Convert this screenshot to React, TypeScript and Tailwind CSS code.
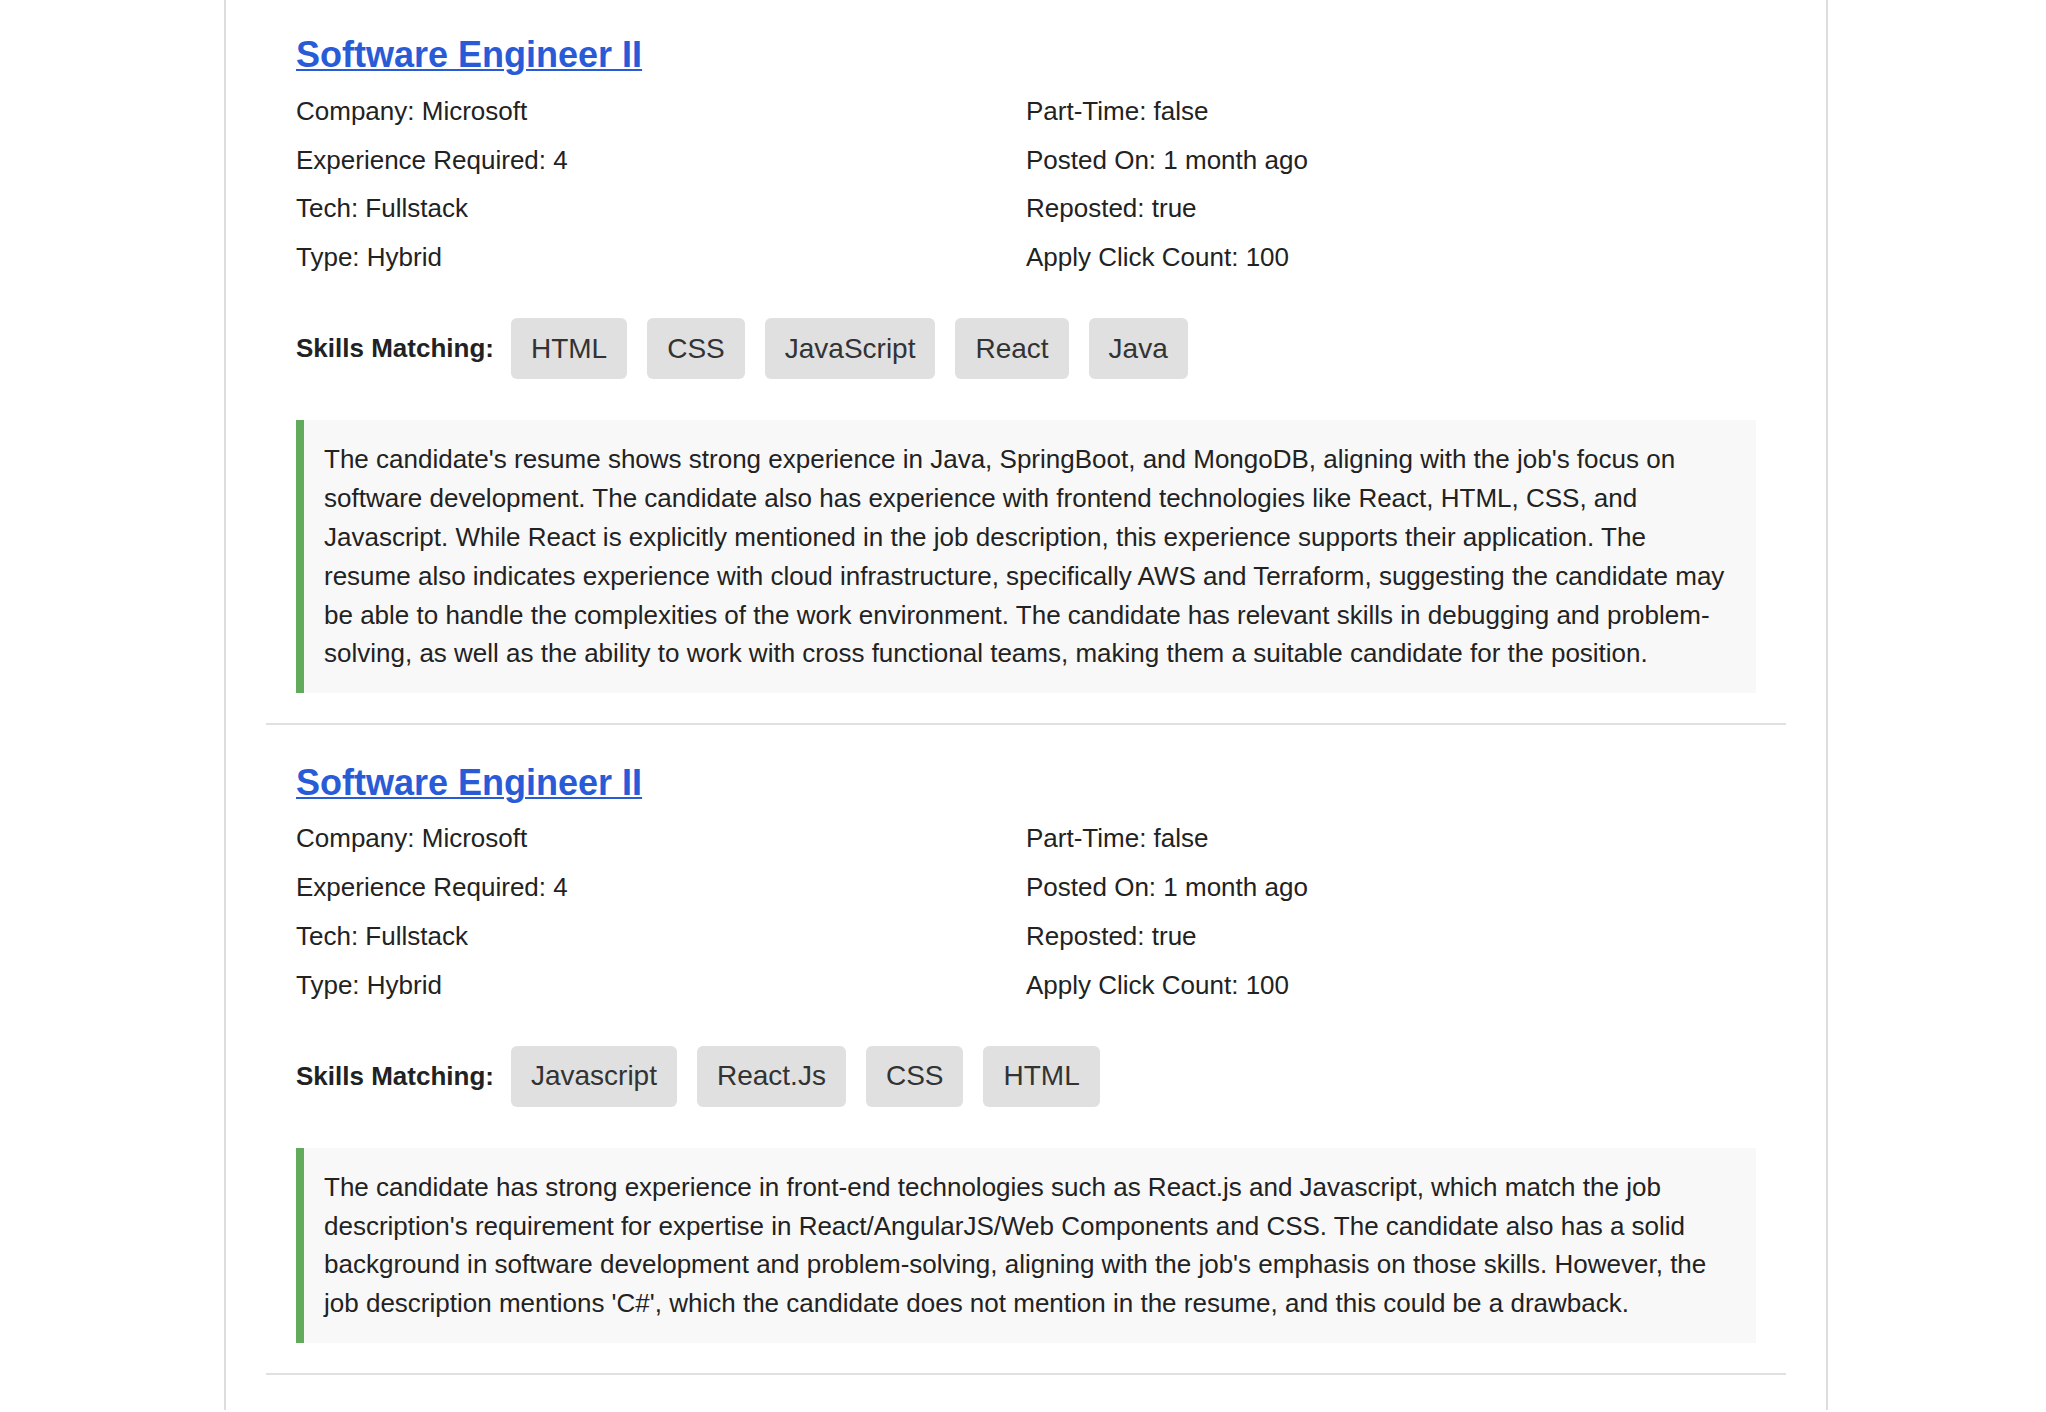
import React from "react";

type Job = {
  title: string;
  company: string;
  experience: string;
  tech: string;
  type: string;
  partTime: string;
  postedOn: string;
  reposted: string;
  applyClicks: string;
  skills: string[];
  summary: string[];
};

const jobs: Job[] = [
  {
    title: "Software Engineer II",
    company: "Microsoft",
    experience: "4",
    tech: "Fullstack",
    type: "Hybrid",
    partTime: "false",
    postedOn: "1 month ago",
    reposted: "true",
    applyClicks: "100",
    skills: ["HTML", "CSS", "JavaScript", "React", "Java"],
    summary: [
      "The candidate's resume shows strong experience in Java, SpringBoot, and MongoDB, aligning with the job's focus on",
      "software development. The candidate also has experience with frontend technologies like React, HTML, CSS, and",
      "Javascript. While React is explicitly mentioned in the job description, this experience supports their application. The",
      "resume also indicates experience with cloud infrastructure, specifically AWS and Terraform, suggesting the candidate may",
      "be able to handle the complexities of the work environment. The candidate has relevant skills in debugging and problem-",
      "solving, as well as the ability to work with cross functional teams, making them a suitable candidate for the position.",
    ],
  },
  {
    title: "Software Engineer II",
    company: "Microsoft",
    experience: "4",
    tech: "Fullstack",
    type: "Hybrid",
    partTime: "false",
    postedOn: "1 month ago",
    reposted: "true",
    applyClicks: "100",
    skills: ["Javascript", "React.Js", "CSS", "HTML"],
    summary: [
      "The candidate has strong experience in front-end technologies such as React.js and Javascript, which match the job",
      "description's requirement for expertise in React/AngularJS/Web Components and CSS. The candidate also has a solid",
      "background in software development and problem-solving, aligning with the job's emphasis on those skills. However, the",
      "job description mentions 'C#', which the candidate does not mention in the resume, and this could be a drawback.",
    ],
  },
];

function JobCard({ job }: { job: Job }) {
  const left = [
    `Company: ${job.company}`,
    `Experience Required: ${job.experience}`,
    `Tech: ${job.tech}`,
    `Type: ${job.type}`,
  ];
  const right = [
    `Part-Time: ${job.partTime}`,
    `Posted On: ${job.postedOn}`,
    `Reposted: ${job.reposted}`,
    `Apply Click Count: ${job.applyClicks}`,
  ];
  return (
    <div className="mx-[40px] px-[30px] pt-[36.6px] pb-[30px] border-b-2 border-[#e0e0e0]">
      <a
        href="#"
        className="block w-fit text-[36px] leading-[42px] font-bold text-[#2a5bd7] underline decoration-[2.4px] underline-offset-[1.5px]"
      >
        {job.title}
      </a>
      <div className="mt-[10.4px] grid grid-cols-2 text-[26px] leading-[48.9px] text-[#222]">
        <div className="flex flex-col">
          {left.map((t) => (
            <div key={t}>{t}</div>
          ))}
        </div>
        <div className="flex flex-col">
          {right.map((t) => (
            <div key={t}>{t}</div>
          ))}
        </div>
      </div>
      <div className="mt-[36px] flex items-center">
        <span className="text-[26px] font-bold text-[#222]">Skills Matching:</span>
        <div className="ml-[17px] flex gap-[20px]">
          {job.skills.map((s) => (
            <span
              key={s}
              className="flex h-[61px] items-center rounded-[6px] bg-[#e0e0e0] px-[20px] text-[28px] text-[#333]"
            >
              {s}
            </span>
          ))}
        </div>
      </div>
      <div className="mt-[40.7px] border-l-[8px] border-[#62aa5c] bg-[#f8f8f8] px-[20px] py-[20px] text-[26px] leading-[38.9px] text-[#222]">
        {job.summary.map((line, i) => (
          <span key={i} className="block whitespace-nowrap">
            {line}
          </span>
        ))}
      </div>
    </div>
  );
}

export default function App() {
  return (
    <div className="min-h-screen bg-white font-['Liberation_Sans',Arial,Helvetica,sans-serif]">
      <div className="ml-[224px] min-h-screen w-[1604px] border-x-2 border-[#dddddd] bg-white">
        <div className="-mt-[2.4px]">
          {jobs.map((j, i) => (
            <JobCard key={i} job={j} />
          ))}
        </div>
      </div>
    </div>
  );
}
